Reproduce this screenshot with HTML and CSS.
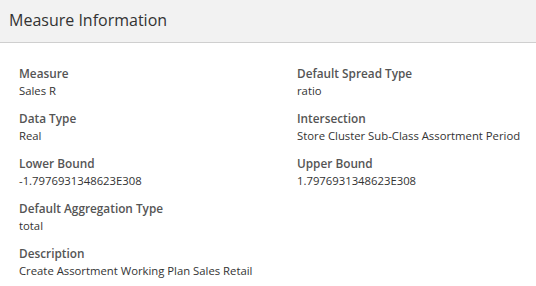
FILE: index.html
```html
<!DOCTYPE html>
<html lang="en">
<head>
    <meta charset="UTF-8">
    <meta name="viewport" content="width=device-width, initial-scale=1.0">
    <title>Measure Information</title>
    <link rel="stylesheet" href="styles.css">
</head>
<body>
    <div class="panel">
        <div class="panel-header">Measure Information</div>
        <div class="panel-body">
            <div class="field">
                <div class="field-label">Measure</div>
                <div class="field-value">Sales R</div>
            </div>
            <div class="field">
                <div class="field-label">Default Spread Type</div>
                <div class="field-value">ratio</div>
            </div>
            <div class="field">
                <div class="field-label">Data Type</div>
                <div class="field-value">Real</div>
            </div>
            <div class="field">
                <div class="field-label">Intersection</div>
                <div class="field-value">Store Cluster Sub-Class Assortment Period</div>
            </div>
            <div class="field">
                <div class="field-label">Lower Bound</div>
                <div class="field-value">-1.7976931348623E308</div>
            </div>
            <div class="field">
                <div class="field-label">Upper Bound</div>
                <div class="field-value">1.7976931348623E308</div>
            </div>
            <div class="field">
                <div class="field-label">Default Aggregation Type</div>
                <div class="field-value">total</div>
            </div>
            <div class="field field-empty"></div>
            <div class="field">
                <div class="field-label">Description</div>
                <div class="field-value">Create Assortment Working Plan Sales Retail</div>
            </div>
        </div>
    </div>
</body>
</html>
```

FILE: styles.css
```css
* {
    margin: 0;
    padding: 0;
    box-sizing: border-box;
}

body {
    font-family: "Open Sans", "Noto Sans", sans-serif;
    background: #ffffff;
    color: #333333;
}

.panel {
    width: 536px;
}

.panel-header {
    height: 43px;
    background: #f2f2f2;
    border-bottom: 1px solid #cfcfcf;
    padding: 9px 0 0 9px;
    font-size: 16px;
    color: #333;
}

.panel-body {
    display: grid;
    grid-template-columns: 278px 1fr;
    row-gap: 9px;
    padding: 21px 0 0 19px;
}

.field-label {
    font-size: 11.8px;
    font-weight: 600;
    color: #555;
    line-height: 18px;
}

.field-value {
    font-size: 11.3px;
    color: #333;
    line-height: 18px;
}
```
